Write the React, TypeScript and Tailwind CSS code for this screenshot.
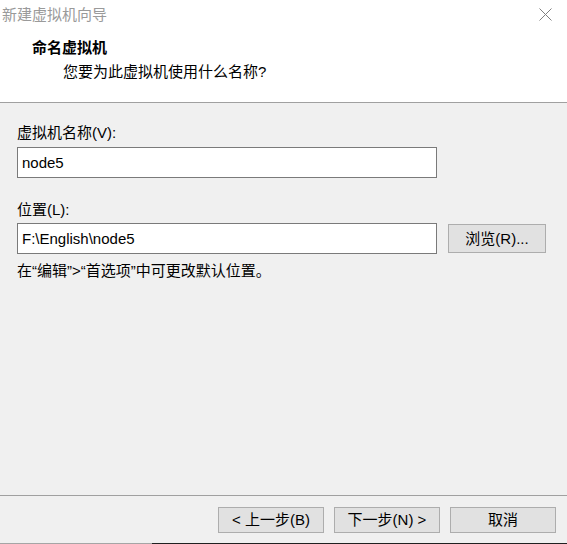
const font = "font-['Liberation_Sans','Noto_Sans_CJK_SC',sans-serif]";

function WinButton({ label, className = "" }: { label: string; className?: string }) {
  return (
    <button
      className={`flex items-center justify-center border border-[#adadad] bg-[#e1e1e1] text-[15px] leading-5 text-black ${className}`}
    >
      {label}
    </button>
  );
}

function TextBox({ value }: { value: string }) {
  return (
    <div className="flex h-[31px] w-[420px] items-center border border-[#7a7a7a] bg-white pl-[4px] text-[15px] leading-5 text-black">
      {value}
    </div>
  );
}

export default function App() {
  return (
    <div className={`flex h-[544px] w-[567px] flex-col bg-[#f0f0f0] ${font}`}>
      {/* header */}
      <div className="flex h-[102px] flex-col bg-white">
        <div className="flex h-[31px] items-start justify-between pt-[5px]">
          <span className="pl-[2px] text-[15px] leading-5 text-[#9a9a9a]">新建虚拟机向导</span>
          <svg width="13" height="13" viewBox="0 0 13 13" className="mr-[15px] mt-[3px]">
            <path d="M0.5 0.5 L12.5 12.5 M12.5 0.5 L0.5 12.5" stroke="#808080" strokeWidth="1" fill="none" />
          </svg>
        </div>
        <div className="pl-[32px] pt-[7px] text-[15px] font-bold leading-5 text-black">命名虚拟机</div>
        <div className="pl-[63px] pt-[4px] text-[15px] leading-5 text-black">您要为此虚拟机使用什么名称?</div>
      </div>
      <div className="h-px bg-[#a0a0a0]" />

      {/* body */}
      <div className="flex flex-1 flex-col px-[17px] pt-[20px] text-[15px] leading-5 text-black">
        <div>虚拟机名称(V):</div>
        <div className="mt-[4px]">
          <TextBox value="node5" />
        </div>
        <div className="mt-[22px]">位置(L):</div>
        <div className="mt-[3px] flex items-center gap-[11px]">
          <TextBox value={"F:\\English\\node5"} />
          <WinButton label="浏览(R)..." className="h-[29px] w-[98px]" />
        </div>
        <div className="mt-[7px]">在“编辑”&gt;“首选项”中可更改默认位置。</div>
      </div>

      {/* footer */}
      <div className="h-px bg-[#a0a0a0]" />
      <div className="flex h-[47px] items-start justify-end gap-[10px] pr-[11px] pt-[11px]">
        <WinButton label="< 上一步(B)" className="h-[26px] w-[106px]" />
        <WinButton label="下一步(N) >" className="h-[26px] w-[106px]" />
        <WinButton label="取消" className="h-[26px] w-[106px]" />
      </div>
      <div className="flex h-px">
        <div className="w-[152px] bg-[#a5a5a5]" />
        <div className="flex-1 bg-[#202020]" />
      </div>
    </div>
  );
}
